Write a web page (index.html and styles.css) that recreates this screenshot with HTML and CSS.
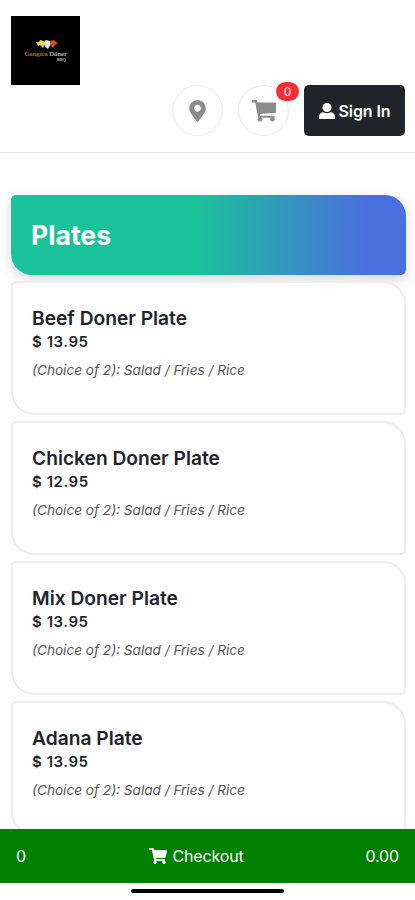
FILE: index.html
```html
<!DOCTYPE html>
<html lang="en">
<head>
<meta charset="utf-8">
<meta name="viewport" content="width=device-width, initial-scale=1">
<title>Plates</title>
<link rel="stylesheet" href="styles.css">
</head>
<body>
<header class="header">
  <div class="logo">
    <svg class="logo-mark" viewBox="0 0 22 9"><path fill="#e8d33a" d="M0 2l3 0 1-2 4 1 1 3-2 4-3-3-2 1z"/><path fill="#e5e2dc" d="M8 2l2-2 4 1 1 3-3 5-3-2z"/><path fill="#d34d24" d="M14 1l4-1 2 2 2 1-3 2-2 3-3-3z"/></svg>
    <div class="logo-name"><span class="logo-first">Gangica</span> <span class="logo-second">Döner</span></div>
    <div class="logo-sub">BBQ</div>
  </div>
  <div class="actions">
    <a class="round"><svg class="pin" viewBox="0 0 384 512"><path d="M172.268 501.67C26.97 291.031 0 269.413 0 192 0 85.961 85.961 0 192 0s192 85.961 192 192c0 77.413-26.97 99.031-172.268 309.67-9.535 13.774-29.93 13.773-39.464 0zM192 272c44.183 0 80-35.817 80-80s-35.817-80-80-80-80 35.817-80 80 35.817 80 80 80z"/></svg></a>
    <a class="round"><svg class="cart-icon" viewBox="0 0 24 22"><path d="M0 0h4.8l.7 2.5H24v10.3L7.8 14l.4 1.700h14.300v2H6.200L3.200 2.500H0z"/><circle cx="8" cy="19.300" r="2.300"/><circle cx="20.500" cy="19.300" r="2.300"/></svg><span class="badge">0</span></a>
    <a class="signin"><svg class="user" viewBox="0 0 16 16"><circle cx="8" cy="4.500" r="4.500"/><path d="M0 16v-2.200C0 11 2 9.300 4.500 9.300c2 1.300 5 1.300 7 0C14 9.300 16 11 16 13.800V16z"/></svg>Sign In</a>
  </div>
</header>
<main class="menu">
  <h1 class="banner">Plates</h1>
  <article class="card"><h2 class="name">Beef Doner Plate</h2><p class="price">$ 13.95</p><p class="note">(Choice of 2): Salad / Fries / Rice</p></article>
  <article class="card"><h2 class="name">Chicken Doner Plate</h2><p class="price">$ 12.95</p><p class="note">(Choice of 2): Salad / Fries / Rice</p></article>
  <article class="card"><h2 class="name">Mix Doner Plate</h2><p class="price">$ 13.95</p><p class="note">(Choice of 2): Salad / Fries / Rice</p></article>
  <article class="card"><h2 class="name">Adana Plate</h2><p class="price">$ 13.95</p><p class="note">(Choice of 2): Salad / Fries / Rice</p></article>
</main>
<footer class="checkout">
  <span>0</span>
  <span class="checkout-label"><svg class="checkout-cart" viewBox="0 0 576 512"><path d="M528.12 301.319l47.273-208C578.806 78.301 567.391 64 551.99 64H159.208l-9.166-44.81C147.758 8.021 137.93 0 126.529 0H24C10.745 0 0 10.745 0 24v16c0 13.255 10.745 24 24 24h69.883l70.248 343.435C147.325 417.1 136 435.222 136 456c0 30.928 25.072 56 56 56s56-25.072 56-56c0-15.674-6.447-29.835-16.824-40h209.647C430.447 426.165 424 440.326 424 456c0 30.928 25.072 56 56 56s56-25.072 56-56c0-22.172-12.888-41.332-31.579-50.405l5.517-24.276c3.413-15.018-8.002-29.319-23.403-29.319H218.117l-6.545-32h293.145c11.206 0 20.92-7.754 23.403-18.681z"/></svg>Checkout</span>
  <span class="total">0.00</span>
</footer>
<div class="home"><div class="home-bar"></div></div>
</body>
</html>
```

FILE: styles.css
```css
* { box-sizing: border-box; }
body {
  margin: 0;
  height: 900px;
  display: flex;
  flex-direction: column;
  overflow: hidden;
  background: #fefefe;
  color: #212529;
  font-family: Inter, "Liberation Sans", sans-serif;
}
h1, h2, p { margin: 0; }
.header {
  flex: none;
  height: 153px;
  padding: 16px 10px 0 11px;
  border-bottom: 1px solid #e6e7e8;
}
.logo {
  width: 69px;
  height: 69px;
  padding-top: 24px;
  background: #000;
  display: flex;
  flex-direction: column;
  align-items: center;
}
.logo-mark { width: 22px; height: 9px; margin-left: 3px; flex: none; }
.logo-name {
  margin-top: 1px;
  font: bold 7px/9px "Liberation Serif", serif;
  letter-spacing: -0.2px;
  white-space: nowrap;
}
.logo-first { color: #ad622f; }
.logo-second { color: #b9b0a9; }
.logo-sub { margin: -2px 0 0 32px; font: bold 4px/5px "Liberation Sans", sans-serif; color: #aaa; }
.actions { display: flex; justify-content: flex-end; }
.round {
  position: relative;
  width: 51px;
  height: 51px;
  margin-right: 15px;
  border: 1px solid #ececec;
  border-radius: 50%;
  display: flex;
  align-items: center;
  justify-content: center;
  fill: #8c8c8c;
}
.pin { width: 17px; height: 22px; margin-right: 1px; }
.cart-icon { width: 24px; height: 22px; }
.badge {
  position: absolute;
  top: -4px;
  right: -11px;
  width: 23px;
  height: 19px;
  border-radius: 10px;
  background: #f62d33;
  color: #fff;
  font-size: 12px;
  line-height: 19px;
  text-align: center;
}
.signin {
  width: 101px;
  height: 51px;
  border-radius: 5px;
  background: #212529;
  color: #fff;
  font-size: 16px;
  font-weight: 600;
  letter-spacing: -0.1px;
  display: flex;
  align-items: center;
  justify-content: center;
  gap: 4px;
}
.user { width: 16px; height: 16px; fill: #fff; }
.menu { flex: 1; min-height: 0; overflow: hidden; padding: 42px 9px 0 11px; }
.banner {
  height: 80px;
  padding-left: 20px;
  border-radius: 5px 21px 5px 21px;
  background: linear-gradient(90deg, #1ac29a 0%, #1ac29a 47%, #4a6fdf 90%, #4a6fdf 100%);
  box-shadow: 0 4px 12px rgba(0, 0, 0, 0.16);
  color: #fff;
  font-size: 26.6px;
  line-height: 80px;
  font-weight: 700;
}
.card {
  position: relative;
  height: 134px;
  margin-top: 6px;
  padding: 24px 19px 0;
  border: 2px solid #ededed;
  border-radius: 5px 23px 5px 23px;
  background: #fefefe;
}
.name { font-size: 19.2px; line-height: 22px; font-weight: 600; }
.price { margin-top: 2px; font-size: 15px; letter-spacing: 0.55px; line-height: 22px; font-weight: 600; }
.note { margin-top: 8px; font-size: 13.6px; line-height: 18px; font-style: italic; color: #555; }
.checkout {
  flex: none;
  height: 54px;
  padding: 0 16px;
  background: #008000;
  color: #fff;
  font-size: 16px;
  letter-spacing: -0.15px;
  display: grid;
  grid-template-columns: 1fr auto 1fr;
  align-items: center;
}
.checkout-label { display: flex; align-items: center; gap: 5px; margin-left: -22px; }
.checkout-cart { width: 18px; height: 16px; fill: #fff; }
.total { text-align: right; }
.home { flex: none; height: 17px; padding-top: 6px; }
.home-bar { width: 153px; height: 4px; margin: 0 auto; border-radius: 2px; background: #000; }
```
